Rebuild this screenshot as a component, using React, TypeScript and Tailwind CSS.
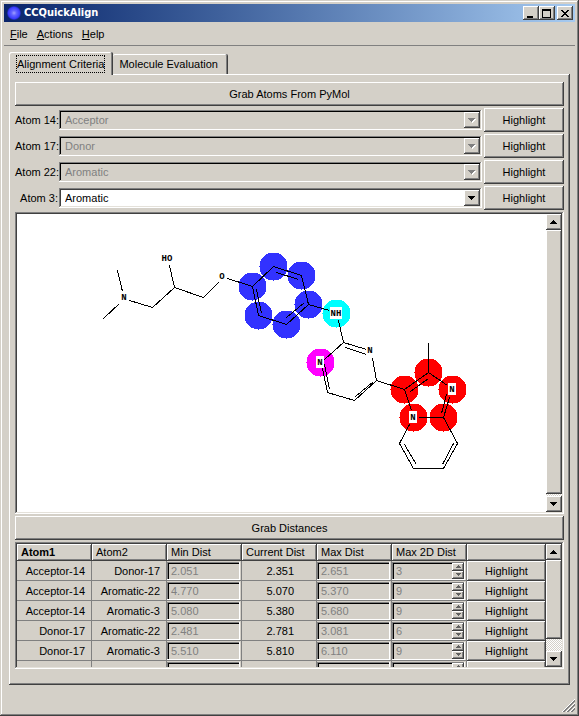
import type { ReactNode } from "react";

const raised =
  "bg-[#d4d0c8] shadow-[inset_-1px_-1px_0_#404040,inset_1px_1px_0_#ffffff,inset_-2px_-2px_0_#808080]";
const sunken =
  "shadow-[inset_-1px_-1px_0_#ffffff,inset_1px_1px_0_#808080,inset_-2px_-2px_0_#e4e1da,inset_2px_2px_0_#404040]";
const sunkenDisabled =
  "shadow-[inset_-1px_-1px_0_#ffffff,inset_1px_1px_0_#808080,inset_-2px_-2px_0_#d4d0c8,inset_2px_2px_0_#000000]";

const criteria = [
  { id: "atom14", label: "Atom 14:", value: "Acceptor", enabled: false },
  { id: "atom17", label: "Atom 17:", value: "Donor", enabled: false },
  { id: "atom22", label: "Atom 22:", value: "Aromatic", enabled: false },
  { id: "atom3", label: "Atom 3:", value: "Aromatic", enabled: true },
];

const distances = [
  ["Acceptor-14", "Donor-17", "2.051", "2.351", "2.651", "3"],
  ["Acceptor-14", "Aromatic-22", "4.770", "5.070", "5.370", "9"],
  ["Acceptor-14", "Aromatic-3", "5.080", "5.380", "5.680", "9"],
  ["Donor-17", "Aromatic-22", "2.481", "2.781", "3.081", "6"],
  ["Donor-17", "Aromatic-3", "5.510", "5.810", "6.110", "9"],
  ["Aromatic-22", "Aromatic-3", "5.980", "6.280", "6.580", "9"],
];

const atomDiscs: [number, number, string][] = [
  [273, 266, "#3232ff"],
  [301, 275, "#3232ff"],
  [308, 304, "#3232ff"],
  [286, 324, "#3232ff"],
  [258, 315, "#3232ff"],
  [252, 286, "#3232ff"],
  [336, 313, "#00ffff"],
  [320, 362, "#ff00ff"],
  [404, 389, "#ff0000"],
  [428, 372, "#ff0000"],
  [452, 389, "#ff0000"],
  [413, 417, "#ff0000"],
  [443, 417, "#ff0000"],
];

const bonds = [
  "M117 270L122 291M103 318L119 303M129 300L152 307L174 287L203 297L218 282M174 287L169 265M227 278L252 286",
  "M273 266L301 275L308 304L286 324L258 315L252 286Z",
  "M276 272L298 279M304 302L286 317M256 289L261 313",
  "M308 304L329 310M338 320L343 342L366 349M345 347L366 354",
  "M372 358L376 380L354 400L327 392L322 368M373 381L355 396M329 389L324 364M324 359L343 342",
  "M376 380L404 389L428 372L447 385M428 372V342M410 391L428 378",
  "M404 389L411 410M418 417H443L449 397M441 413L446 394",
  "M409 424L399 443L413 468H443L457 443L443 417M404 444L416 464M453 443L442 464",
];

const atomLabels: [number, number, string, boolean][] = [
  [167, 258, "HO", false],
  [222, 276, "O", false],
  [124, 297, "N", false],
  [336, 313, "NH", true],
  [320, 362, "N", true],
  [370, 350, "N", false],
  [452, 389, "N", true],
  [413, 417, "N", true],
];

function Arrow({ up = false, dim = false }: { up?: boolean; dim?: boolean }) {
  const shape = up
    ? "M3 0h1v1h1v1h1v1h1v1H0V3h1V2h1V1h1z"
    : "M0 0h7v1H6v1H5v1H4v1H3V3H2V2H1V1H0z";
  return (
    <svg width="8" height="5" viewBox="0 0 8 5" shapeRendering="crispEdges" aria-hidden="true">
      {dim && <path d={shape} transform="translate(1 1)" fill="#ffffff" />}
      <path d={shape} fill={dim ? "#808080" : "#000000"} />
    </svg>
  );
}

function PushButton({ children, className }: { children: ReactNode; className: string }) {
  return (
    <button type="button" className={`${raised} ${className}`}>
      {children}
    </button>
  );
}

function ScrollBar({ thumb }: { thumb: string }) {
  return (
    <div className="flex w-4 shrink-0 flex-col bg-[repeating-conic-gradient(#ffffff_0_25%,#d4d0c8_0_50%)] bg-[length:2px_2px]">
      <button type="button" aria-label="Scroll up" className={`${raised} flex h-4 shrink-0 items-center justify-center`}>
        <Arrow up />
      </button>
      <div className={`${raised} ${thumb}`} />
      <button
        type="button"
        aria-label="Scroll down"
        className={`${raised} mt-auto flex h-4 shrink-0 items-center justify-center`}
      >
        <Arrow />
      </button>
    </div>
  );
}

function TitleBar() {
  const control = `${raised} flex h-[14px] w-4 items-center justify-center`;
  return (
    <header className="flex h-[18px] items-center bg-linear-to-r from-[#0a246a] to-[#a6caf0] px-[2px]">
      <svg width="16" height="16" viewBox="0 0 16 16" aria-hidden="true">
        <defs>
          <radialGradient id="orb">
            <stop offset="0" stopColor="#a0a0ff" />
            <stop offset="0.35" stopColor="#6464ff" />
            <stop offset="0.8" stopColor="#3c3cff" />
            <stop offset="1" stopColor="#2828d8" stopOpacity="0.5" />
          </radialGradient>
        </defs>
        <circle cx="8" cy="8" r="7" fill="url(#orb)" />
      </svg>
      <h1 className="ml-[2px] font-['DejaVu_Sans_Condensed','DejaVu_Sans',sans-serif] text-[11px] font-bold text-white">
        CCQuickAlign
      </h1>
      <div className="ml-auto flex">
        <button type="button" aria-label="Minimize" className={control}>
          <svg width="10" height="9" viewBox="0 0 10 9" shapeRendering="crispEdges">
            <path d="M1 7h6v2H1z" />
          </svg>
        </button>
        <button type="button" aria-label="Maximize" className={control}>
          <svg width="10" height="9" viewBox="0 0 10 9" shapeRendering="crispEdges">
            <path fillRule="evenodd" d="M0 0h9v9H0zM1 2h7v6H1z" />
          </svg>
        </button>
        <button type="button" aria-label="Close" className={`${control} ml-[2px]`}>
          <svg width="8" height="7" viewBox="0 0 8 7" shapeRendering="crispEdges">
            <path d="M0 0h2v1h1v1h2V1h1V0h2v1H7v1H6v1H5v1h1v1h1v1h1v1H6V6H5V5H3v1H2v1H0V6h1V5h1V4h1V3H2V2H1V1H0z" />
          </svg>
        </button>
      </div>
    </header>
  );
}

function Molecule() {
  return (
    <svg
      width="530"
      height="298"
      viewBox="17 214 530 298"
      role="img"
      aria-label="Molecule structure"
      className="block font-['Liberation_Mono',monospace] text-[9px] font-bold"
    >
      <g shapeRendering="crispEdges">
        {atomDiscs.map(([x, y, color]) => (
          <circle key={`${x}-${y}`} cx={x + 0.5} cy={y + 0.5} r="14" fill={color} />
        ))}
        <g transform="translate(0.5 0.5)" fill="none" stroke="#000000">
          {bonds.map((d) => (
            <path key={d} d={d} />
          ))}
        </g>
      </g>
      {atomLabels.map(([x, y, text, boxed]) => (
        <g key={`${x}-${y}`}>
          {boxed && (
            <rect
              x={text.length > 1 ? x - 6 : x - 4}
              y={y - 6}
              width={text.length > 1 ? 12 : 8}
              height="12"
              fill="#ffffff"
            />
          )}
          <text x={x} y={y + 3} textAnchor="middle">
            {text}
          </text>
        </g>
      ))}
    </svg>
  );
}

function CriteriaRows() {
  return (
    <div className="grid grid-cols-[43px_1fr_80px] items-center gap-x-px gap-y-[2px]">
      {criteria.map((row) => (
        <div key={row.id} className="contents">
          <label htmlFor={row.id} className="text-right whitespace-nowrap">
            {row.label}
          </label>
          <div
            className={`relative mr-px flex h-5 ${row.enabled ? `${sunken} bg-white` : `${sunkenDisabled} bg-[#d4d0c8]`}`}
          >
            <select
              id={row.id}
              disabled={!row.enabled}
              defaultValue={row.value}
              className="h-full w-full appearance-none bg-transparent pl-[6px] leading-[20px] text-black outline-none disabled:text-[#808080] disabled:opacity-100"
            >
              <option>Acceptor</option>
              <option>Donor</option>
              <option>Aromatic</option>
            </select>
            <span
              className={`${raised} pointer-events-none absolute top-[2px] right-[2px] bottom-[2px] flex w-4 items-center justify-center`}
            >
              <Arrow dim={!row.enabled} />
            </span>
          </div>
          <PushButton className="h-6">Highlight</PushButton>
        </div>
      ))}
    </div>
  );
}

function DistanceTable() {
  const headers = ["Atom1", "Atom2", "Min Dist", "Current Dist", "Max Dist", "Max 2D Dist", ""];
  const field = "h-[19px] w-full min-w-0 bg-transparent pl-1 text-[#808080] outline-none";
  const well =
    "mr-px flex h-[18px] shadow-[inset_-1px_-1px_0_#ffffff,inset_1px_1px_0_#808080,inset_2px_2px_0_#000000]";
  const cell = "h-5 border-r border-b border-[#808080] p-0";
  return (
    <table className="w-full table-fixed border-separate border-spacing-0">
      <thead>
        <tr>
          {headers.map((name, i) => (
            <th
              key={name}
              className={`h-[17px] p-0 pl-1 text-left leading-[17px] whitespace-nowrap ${raised} ${
                i === 0 ? "font-bold" : "font-normal"
              } ${i === 6 ? "w-[79px]" : "w-[75px]"}`}
            >
              {name}
            </th>
          ))}
        </tr>
      </thead>
      <tbody>
        {distances.map(([a, b, min, current, max, max2d]) => (
          <tr key={a + b}>
            <td className={`${cell} pr-[6px] text-right`}>{a}</td>
            <td className={`${cell} pr-[6px] text-right`}>{b}</td>
            <td className={cell}>
              <div className={well}>
                <input aria-label={`Min distance ${a} ${b}`} disabled defaultValue={min} className={field} />
              </div>
            </td>
            <td className={`${cell} pr-[22px] text-right`}>{current}</td>
            <td className={cell}>
              <div className={well}>
                <input aria-label={`Max distance ${a} ${b}`} disabled defaultValue={max} className={field} />
              </div>
            </td>
            <td className={cell}>
              <div className={`${well} pr-px`}>
                <input aria-label={`Max 2D distance ${a} ${b}`} disabled defaultValue={max2d} className={field} />
                <span className="mt-px flex h-4 w-3 shrink-0 flex-col">
                  <button
                    type="button"
                    disabled
                    aria-label="Increase"
                    className={`${raised} flex h-2 w-3 items-center justify-center`}
                  >
                    <svg width="5" height="3" viewBox="0 0 5 3" shapeRendering="crispEdges">
                      <path d="M2 0h1v1h1v1h1v1H0V2h1V1h1z" fill="#606060" />
                    </svg>
                  </button>
                  <button
                    type="button"
                    disabled
                    aria-label="Decrease"
                    className={`${raised} flex h-2 w-3 items-center justify-center`}
                  >
                    <svg width="5" height="3" viewBox="0 0 5 3" shapeRendering="crispEdges">
                      <path d="M0 0h5v1H4v1H3v1H2V2H1V1H0z" fill="#606060" />
                    </svg>
                  </button>
                </span>
              </div>
            </td>
            <td className="h-5 p-0">
              <PushButton className="block h-5 w-full">Highlight</PushButton>
            </td>
          </tr>
        ))}
      </tbody>
    </table>
  );
}

export default function App() {
  return (
    <div className="flex min-h-screen flex-col bg-[#d4d0c8] p-1 font-['Liberation_Sans',Arial,sans-serif] text-[11px] leading-[14px] text-black shadow-[inset_-1px_-1px_0_#404040,inset_1px_1px_0_#d4d0c8,inset_-2px_-2px_0_#808080,inset_2px_2px_0_#ffffff]">
      <TitleBar />
      <nav className="flex h-6 items-center gap-[9px] border-b border-[#808080] px-[6px]">
        {["File", "Actions", "Help"].map((item) => (
          <button key={item} type="button" className="first-letter:underline">
            {item}
          </button>
        ))}
      </nav>
      <main className="flex flex-1 flex-col px-[5px] pt-[6px] pb-[14px]">
        <div role="tablist" className="flex items-end">
          <button
            type="button"
            role="tab"
            aria-selected="true"
            className="relative -mb-px h-[23px] rounded-t-xs bg-[#d4d0c8] pr-2 pl-[7px] shadow-[inset_-1px_0_0_#404040,inset_1px_1px_0_#ffffff,inset_-2px_0_0_#808080]"
          >
            <span className="block border border-dotted border-black leading-[16px]">Alignment Criteria</span>
          </button>
          <button
            type="button"
            role="tab"
            aria-selected="false"
            className="h-5 rounded-t-xs pr-[10px] pl-[6px] shadow-[inset_-1px_0_0_#404040,inset_0_1px_0_#ffffff,inset_-2px_0_0_#808080]"
          >
            Molecule Evaluation
          </button>
        </div>
        <section
          role="tabpanel"
          className="flex flex-1 flex-col gap-[2px] px-[6px] pt-2 pb-4 shadow-[inset_-1px_-1px_0_#404040,inset_1px_1px_0_#ffffff,inset_-2px_-2px_0_#808080]"
        >
          <PushButton className="h-6">Grab Atoms From PyMol</PushButton>
          <CriteriaRows />
          <div className={`flex flex-1 bg-white p-[2px] ${sunken}`}>
            <div className="min-w-0 flex-1 overflow-hidden">
              <Molecule />
            </div>
            <ScrollBar thumb="mb-[2px] flex-1" />
          </div>
          <PushButton className="h-6">Grab Distances</PushButton>
          <div className={`flex h-[127px] p-[2px] ${sunken}`}>
            <div className="min-w-0 flex-1 overflow-hidden">
              <DistanceTable />
            </div>
            <ScrollBar thumb="h-[79px]" />
          </div>
        </section>
      </main>
      <footer className="flex h-[13px] justify-end">
        <svg width="13" height="13" viewBox="0 0 13 13" shapeRendering="crispEdges" aria-hidden="true">
          <path d="M0 13L13 0M4 13L13 4M8 13L13 8" stroke="#ffffff" />
          <path d="M1 13L13 1M2 13L13 2M5 13L13 5M6 13L13 6M9 13L13 9M10 13L13 10" stroke="#808080" />
        </svg>
      </footer>
    </div>
  );
}
